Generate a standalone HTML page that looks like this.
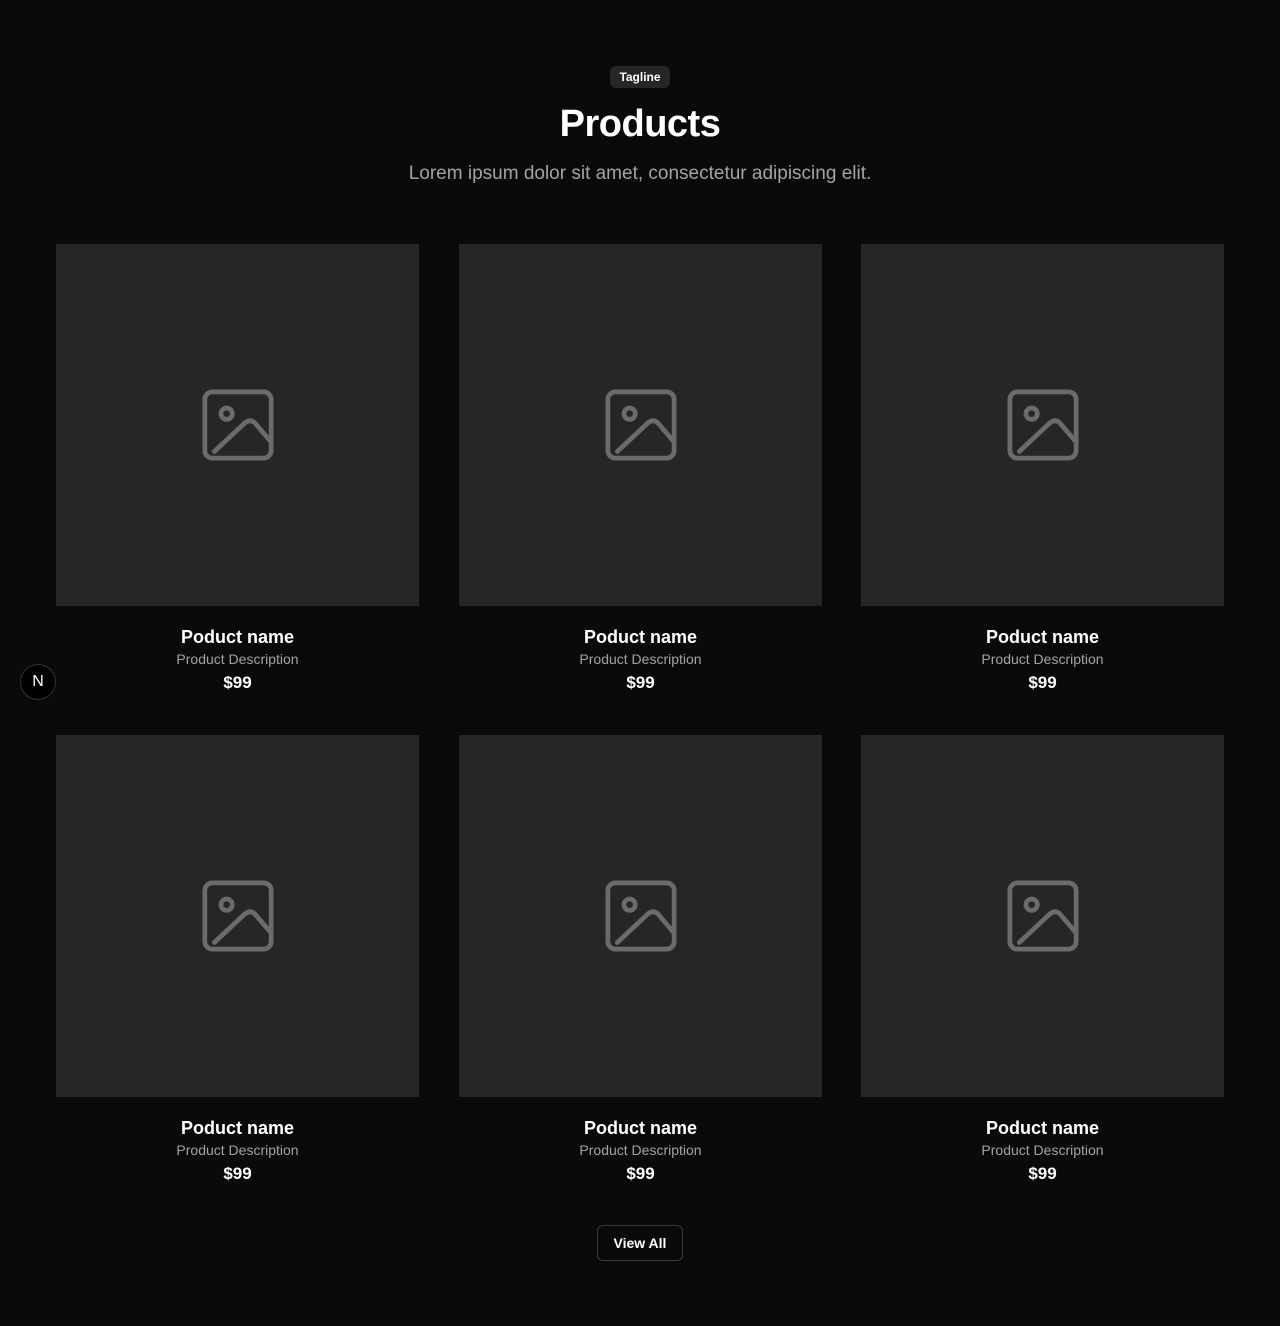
<!DOCTYPE html>
<html><head><style>
body{margin:0;background:#0a0a0a;font-family:"Liberation Sans",sans-serif;color:#fff;width:1280px;height:1326px;position:relative;overflow:hidden}
.tag{position:absolute;left:610px;top:66px;width:60px;height:22px;background:#262626;border-radius:6px;font-size:12px;font-weight:bold;text-align:center;line-height:22px}
h1{position:absolute;left:0;right:0;top:101px;margin:0;text-align:center;font-size:38px;font-weight:bold;letter-spacing:-0.5px;line-height:46px}
.sub{position:absolute;left:0;right:0;top:162px;text-align:center;font-size:19px;color:#a3a3a3;line-height:24px}
.card{position:absolute;width:363px}
.img{height:362px;background:#262626;display:flex;align-items:center;justify-content:center}
.n{text-align:center;font-weight:bold;font-size:18px;margin-top:20px;line-height:22px}
.d{text-align:center;font-size:14px;color:#a3a3a3;line-height:23px}
.p{text-align:center;font-weight:bold;font-size:17px;line-height:22px;margin-top:1px}
.btn{position:absolute;left:597px;top:1225px;width:84px;height:34px;border:1px solid #3a3a3a;border-radius:6px;text-align:center;line-height:34px;font-size:14px;font-weight:bold}
.nb{position:absolute;left:20px;top:664px;width:34px;height:34px;border-radius:50%;background:#000;border:1px solid #333;text-align:center;line-height:34px;font-size:16px}
</style></head><body>
<div class="tag">Tagline</div>
<h1>Products</h1>
<div class="sub">Lorem ipsum dolor sit amet, consectetur adipiscing elit.</div>
<div class="card" style="left:56px;top:244px"><div class="img"><svg width="72" height="72" viewBox="0 0 76 76" fill="none" stroke="#6b6b6b" stroke-width="5" stroke-linecap="round" stroke-linejoin="round"><rect x="3" y="3" width="70" height="70" rx="8"/><circle cx="26" cy="26" r="6"/><path d="M13 66L45 36Q51 31 56 36L73 56"/></svg></div><div class="n">Poduct name</div><div class="d">Product Description</div><div class="p">$99</div></div>
<div class="card" style="left:459px;top:244px"><div class="img"><svg width="72" height="72" viewBox="0 0 76 76" fill="none" stroke="#6b6b6b" stroke-width="5" stroke-linecap="round" stroke-linejoin="round"><rect x="3" y="3" width="70" height="70" rx="8"/><circle cx="26" cy="26" r="6"/><path d="M13 66L45 36Q51 31 56 36L73 56"/></svg></div><div class="n">Poduct name</div><div class="d">Product Description</div><div class="p">$99</div></div>
<div class="card" style="left:861px;top:244px"><div class="img"><svg width="72" height="72" viewBox="0 0 76 76" fill="none" stroke="#6b6b6b" stroke-width="5" stroke-linecap="round" stroke-linejoin="round"><rect x="3" y="3" width="70" height="70" rx="8"/><circle cx="26" cy="26" r="6"/><path d="M13 66L45 36Q51 31 56 36L73 56"/></svg></div><div class="n">Poduct name</div><div class="d">Product Description</div><div class="p">$99</div></div>
<div class="card" style="left:56px;top:735px"><div class="img"><svg width="72" height="72" viewBox="0 0 76 76" fill="none" stroke="#6b6b6b" stroke-width="5" stroke-linecap="round" stroke-linejoin="round"><rect x="3" y="3" width="70" height="70" rx="8"/><circle cx="26" cy="26" r="6"/><path d="M13 66L45 36Q51 31 56 36L73 56"/></svg></div><div class="n">Poduct name</div><div class="d">Product Description</div><div class="p">$99</div></div>
<div class="card" style="left:459px;top:735px"><div class="img"><svg width="72" height="72" viewBox="0 0 76 76" fill="none" stroke="#6b6b6b" stroke-width="5" stroke-linecap="round" stroke-linejoin="round"><rect x="3" y="3" width="70" height="70" rx="8"/><circle cx="26" cy="26" r="6"/><path d="M13 66L45 36Q51 31 56 36L73 56"/></svg></div><div class="n">Poduct name</div><div class="d">Product Description</div><div class="p">$99</div></div>
<div class="card" style="left:861px;top:735px"><div class="img"><svg width="72" height="72" viewBox="0 0 76 76" fill="none" stroke="#6b6b6b" stroke-width="5" stroke-linecap="round" stroke-linejoin="round"><rect x="3" y="3" width="70" height="70" rx="8"/><circle cx="26" cy="26" r="6"/><path d="M13 66L45 36Q51 31 56 36L73 56"/></svg></div><div class="n">Poduct name</div><div class="d">Product Description</div><div class="p">$99</div></div>
<div class="btn">View All</div>
<div class="nb">N</div>
</body></html>
